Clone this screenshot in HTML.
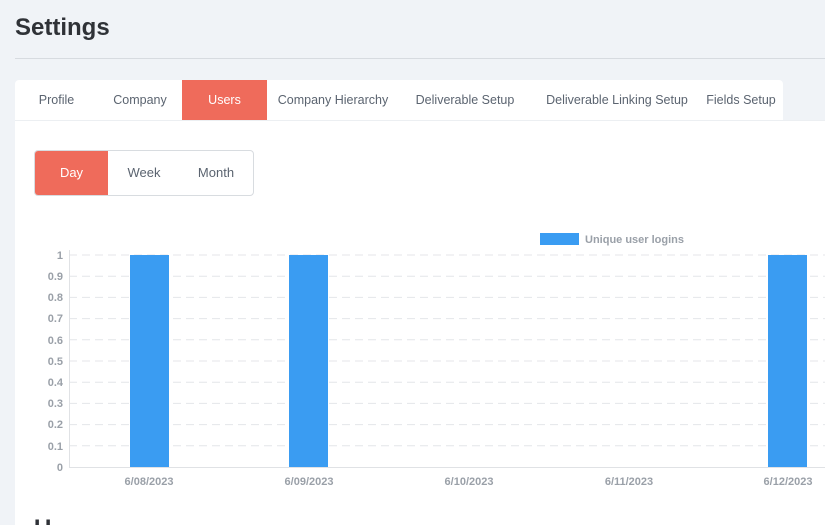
<!DOCTYPE html>
<html><head><style>
body{margin:0;width:825px;height:525px;overflow:hidden;background:#f0f3f7;font-family:"Liberation Sans",sans-serif;position:relative}
.t{position:absolute;left:15px;top:14px;font-size:24px;font-weight:bold;color:#2f3237}
.hr{position:absolute;left:15px;right:0;top:58px;height:1px;background:#d7dbe0}
.tabs{position:absolute;left:15px;top:80px;width:768px;height:40px;background:#fff;border-radius:4px 4px 0 0}
.tab{position:absolute;top:0;height:40px;line-height:40px;font-size:12.5px;color:#5b6470;text-align:center}
.card{position:absolute;left:15px;top:120px;right:0;bottom:0;background:#fff;border-top:1px solid #eceff2}
.seg{position:absolute;left:34px;top:150px;width:218px;height:44px;border:1px solid #d8dce0;border-radius:4px;background:#fff;overflow:hidden}
.seg div{position:absolute;top:0;height:44px;line-height:44px;font-size:13px;color:#5b6470;text-align:center}
</style></head><body>
<div class="t">Settings</div><div class="hr"></div>
<div class="card"></div>
<div class="tabs">
<div class="tab" style="left:0;width:83px">Profile</div>
<div class="tab" style="left:83px;width:84px">Company</div>
<div class="tab" style="left:167px;width:85px;background:#ef6b5b;color:#fff">Users</div>
<div class="tab" style="left:252px;width:132px">Company Hierarchy</div>
<div class="tab" style="left:384px;width:132px">Deliverable Setup</div>
<div class="tab" style="left:516px;width:172px">Deliverable Linking Setup</div>
<div class="tab" style="left:688px;width:76px">Fields Setup</div>
</div>
<div class="seg"><div style="left:0;width:73px;background:#ef6b5b;color:#fff">Day</div><div style="left:73px;width:72px">Week</div><div style="left:145px;width:72px">Month</div></div>
<svg style="position:absolute;left:0;top:0" width="825" height="525">
<rect x="540" y="233" width="39" height="12" fill="#3a9cf2"/>
<text x="585" y="243" font-size="11" font-weight="bold" fill="#9aa0a8" font-family="Liberation Sans">Unique user logins</text>
<g stroke="#e4e6e9" stroke-dasharray="8,5">
<line x1="69" x2="825" y1="255" y2="255"/><line x1="69" x2="825" y1="276.2" y2="276.2"/><line x1="69" x2="825" y1="297.4" y2="297.4"/><line x1="69" x2="825" y1="318.6" y2="318.6"/><line x1="69" x2="825" y1="339.8" y2="339.8"/><line x1="69" x2="825" y1="361" y2="361"/><line x1="69" x2="825" y1="382.2" y2="382.2"/><line x1="69" x2="825" y1="403.4" y2="403.4"/><line x1="69" x2="825" y1="424.6" y2="424.6"/><line x1="69" x2="825" y1="445.8" y2="445.8"/></g>
<line x1="69.5" x2="69.5" y1="250" y2="468" stroke="#e0e2e5"/>
<line x1="69" x2="825" y1="467.5" y2="467.5" stroke="#e0e2e5"/>
<g fill="#3a9cf2"><rect x="130" y="255" width="39" height="212"/><rect x="289" y="255" width="39" height="212"/><rect x="768" y="255" width="39" height="212"/></g>
<g font-size="11" font-weight="bold" fill="#9aa0a8" font-family="Liberation Sans" text-anchor="end">
<text x="63" y="259">1</text><text x="63" y="280">0.9</text><text x="63" y="301">0.8</text><text x="63" y="322">0.7</text><text x="63" y="344">0.6</text><text x="63" y="365">0.5</text><text x="63" y="386">0.4</text><text x="63" y="407">0.3</text><text x="63" y="428">0.2</text><text x="63" y="450">0.1</text><text x="63" y="471">0</text></g>
<g font-size="11" font-weight="bold" fill="#9aa0a8" font-family="Liberation Sans" text-anchor="middle">
<text x="149" y="485">6/08/2023</text><text x="309" y="485">6/09/2023</text><text x="469" y="485">6/10/2023</text><text x="629" y="485">6/11/2023</text><text x="788" y="485">6/12/2023</text></g>
<text x="34" y="536" font-size="24" font-weight="bold" fill="#2f3237" font-family="Liberation Sans">U</text>
</svg>
</body></html>
